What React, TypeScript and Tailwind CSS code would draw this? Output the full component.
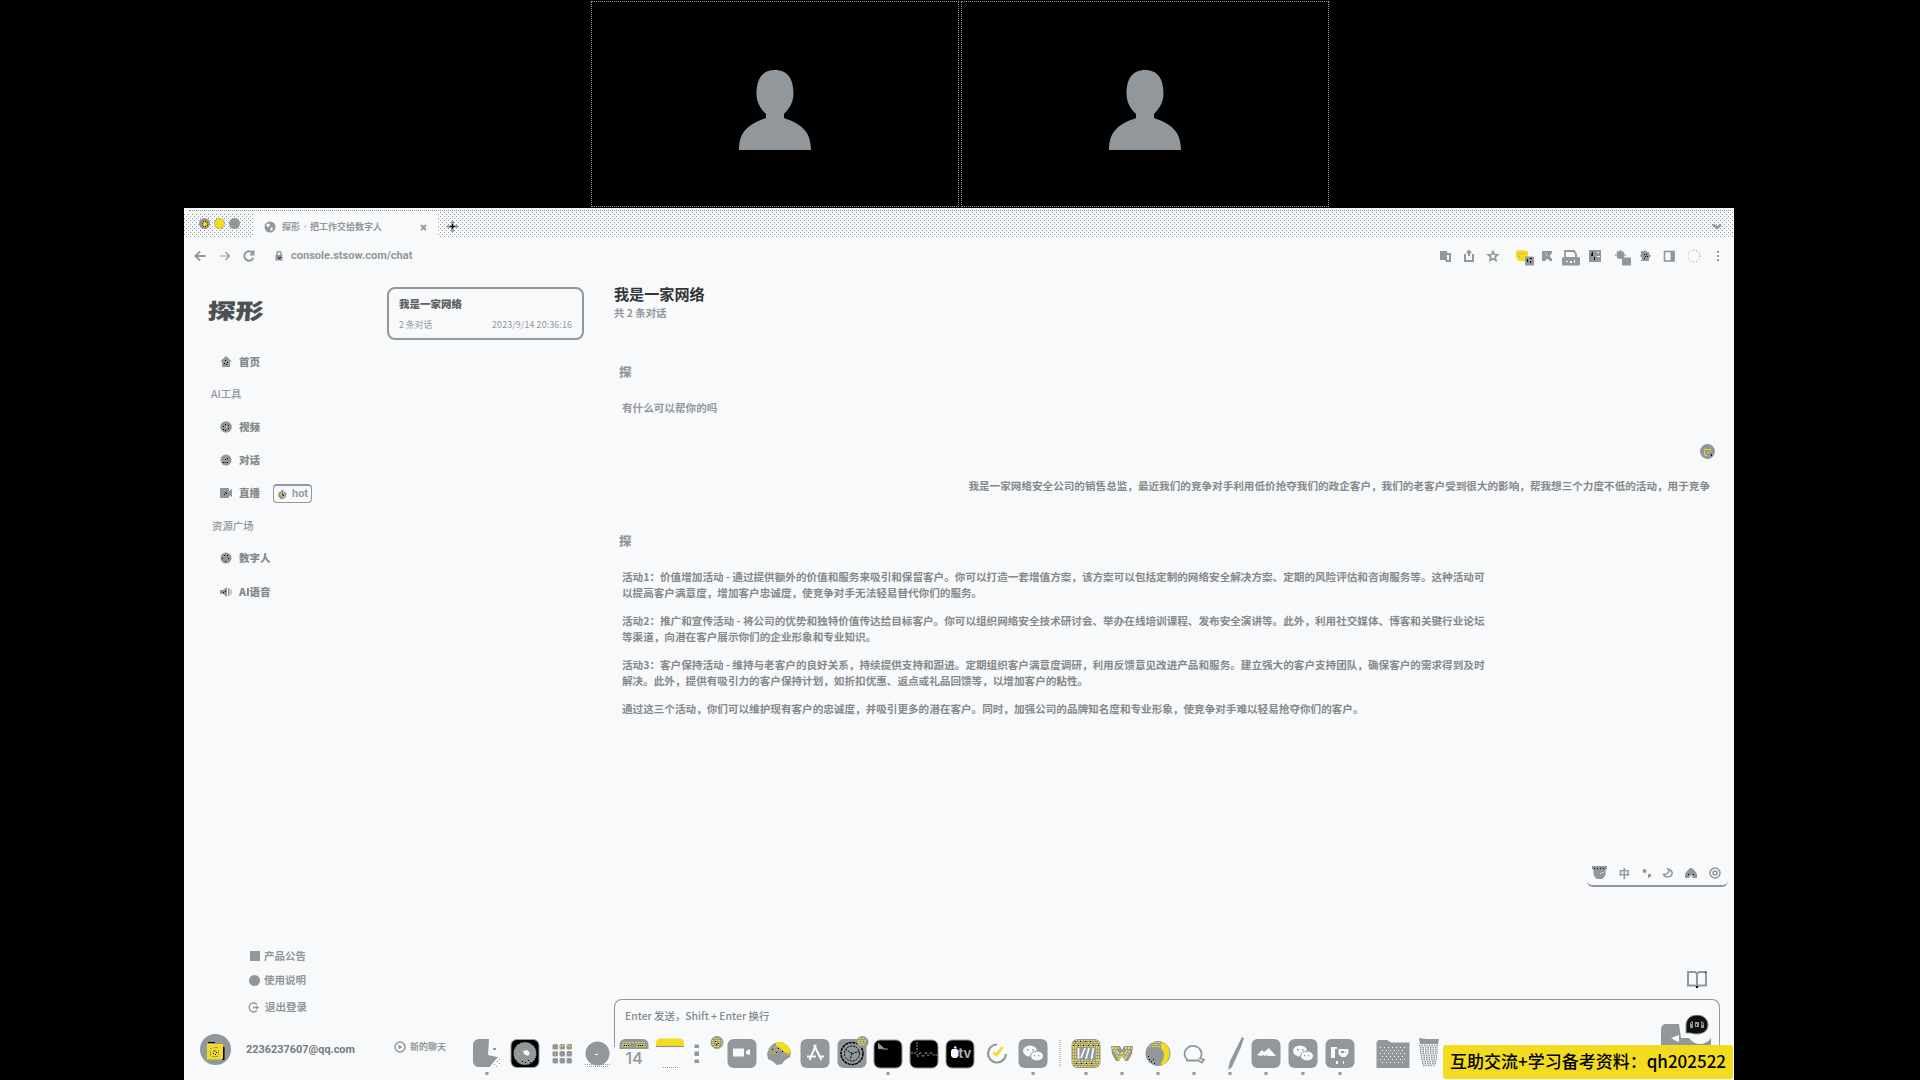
import type { ReactNode } from "react";

const G = "#91979a";
const Y = "#f3dc1f";
const BG = "#f8f9fb";

function Participant() {
  return (
    <div className="flex h-[206px] w-[368px] justify-center border border-dotted border-[#91979a] pt-[68px]">
      <svg width="72" height="80" viewBox="0 0 72 80" className="-ml-px">
        <path d="M36 0C23 0 17.500 9 17.500 24c0 9 5 16 9.500 20v4C10 54 0 61 0 80h72C72 61 62 54 45 48v-4c4-4 9.500-11 9.500-20C54.500 9 49 0 36 0Z" fill={G} />
      </svg>
    </div>
  );
}

function Dots({ className }: { className: string }) {
  return (
    <div
      className={
        "bg-[conic-gradient(at_1px_1px,transparent_75%,#91979a_0),conic-gradient(at_1px_1px,transparent_75%,#91979a_0)] bg-[length:4px_4px] bg-[position:0_0,2px_2px] " +
        className
      }
    />
  );
}

function TabStrip() {
  return (
    <div className="h-[29px] pt-px">
      <div className="relative flex h-[28px] items-start">
        <Dots className="mt-[5px] h-[24px] w-[69px]" />
        <div className="flex h-[28px] w-[185px] items-center pt-[8px] pl-[11px]">
          <svg width="12" height="12" viewBox="0 0 12 12" className="shrink-0">
            <circle cx="6" cy="6" r="5.500" fill={G} />
            <path d="M2 4l2-1.500 2 .8-.5 2L3.500 6ZM6.500 6.500l2.500.2-.7 2.300-1.600 1Z" fill={BG} />
          </svg>
          <span className="ml-[6px] whitespace-nowrap text-[9px] leading-[14px] font-bold text-[#91979a]">
            探形<span className="inline-block w-[10px] text-center font-['Roboto']">·</span>把工作交给数字人
          </span>
          <svg width="7" height="7" viewBox="0 0 7 7" className="mr-[11px] ml-auto" stroke={G} strokeWidth="1.800">
            <path d="M1 1l5 5M6 1L1 6" />
          </svg>
        </div>
        <Dots className="mt-px h-[27px] flex-1" />
        <div className="absolute top-px left-[5px] w-[1540px] border-t border-dotted border-[#91979a]" />
        <div className="absolute top-[9px] left-[15px] flex gap-[4px]">
          <div className="flex size-[11px] items-center justify-center rounded-full bg-[#91979a]">
            <div className="size-[6px] rounded-full border border-dotted border-black bg-[#f3dc1f]" />
          </div>
          <div className="size-[11px] rounded-full border border-dotted border-[#91979a] bg-[#f3dc1f]" />
          <div className="size-[11px] rounded-full bg-[#91979a]" />
        </div>
        <svg width="13" height="13" viewBox="0 0 13 13" className="absolute top-[11px] left-[262px]">
          <path d="M6.500 1v11M1 6.500h11" stroke={G} strokeWidth="2.600" />
          <path d="M6.500 4v5M4 6.500h5" stroke="#000" strokeWidth="1" />
        </svg>
        <svg width="10" height="7" viewBox="0 0 10 7" className="absolute top-[14px] left-[1528px]">
          <path d="M1 1.500l4 3.500 4-3.500" stroke={G} strokeWidth="2.500" fill="none" />
        </svg>
      </div>
    </div>
  );
}

function Ext({ ml, w = 14, children }: { ml: string; w?: number; children: ReactNode }) {
  return (
    <svg width={w} height="20" viewBox={`0 0 ${w} 20`} className={"shrink-0 " + ml}>
      {children}
    </svg>
  );
}

function AddressBar() {
  return (
    <div className="flex h-[38px] items-center">
      <svg width="12" height="12" viewBox="0 0 12 12" className="ml-[10px]" fill="none" stroke={G} strokeWidth="2">
        <path d="M11.500 6H2M6 1.500L1.500 6 6 10.500" />
      </svg>
      <svg width="12" height="12" viewBox="0 0 12 12" className="ml-[13px]" fill="none" stroke={G} strokeWidth="1.200">
        <path d="M1 6h9M6.500 2l4 4-4 4" />
      </svg>
      <svg width="12" height="12" viewBox="0 0 12 12" className="ml-[12px]" fill="none" stroke={G} strokeWidth="2">
        <path d="M10.300 8A4.700 4.700 0 1 1 9.500 2.700M10.500.5v4H7" />
      </svg>
      <svg width="8" height="10" viewBox="0 0 8 10" className="ml-[20px]">
        <path d="M2 4V2.500a2 2 0 0 1 4 0V4" fill="none" stroke={G} strokeWidth="1.500" />
        <rect x=".5" y="4" width="7" height="5.500" fill={G} />
        <path d="M3 6h1v1H3zM5 6h1v1H5zM4 7h1v1H4z" />
      </svg>
      <span className="ml-[8px] w-[122px] whitespace-nowrap font-['Roboto'] text-[11.050px] leading-[16px] font-bold text-[#91979a]">console.stsow.com/chat</span>
      <div className="ml-auto flex items-center pr-[11px]">
        <Ext ml="ml-0">
          <path d="M2 5h7v2h4v9H8l-1-2H2z" fill={G} />
          <path d="M9 9h2v5H9z" fill={BG} />
        </Ext>
        <Ext ml="ml-[10px]">
          <path d="M4 9H3v6h8V9h-1M7 5v5M5 7l2-2 2 2" fill="none" stroke={G} strokeWidth="2" />
        </Ext>
        <Ext ml="ml-[10px]">
          <path d="M7 5.500l1.400 3 3.400.3-2.600 2.200.8 3.400L7 12.700l-3 1.700.8-3.400-2.600-2.200 3.400-.3z" fill={BG} stroke={G} strokeWidth="1.600" />
        </Ext>
        <Ext ml="ml-[15px]" w={20}>
          <path d="M1 5l5-1 7 1v6l-3 4H4L1 11z" fill={Y} />
          <path d="M3 7h1v1H3zM6 7h1v1H6zM9 7h1v1H9zM4 10h1v1H4z" fill={G} />
          <rect x="10" y="10.500" width="9" height="9" rx="1" fill={G} />
          <path d="M12 13h1v3h-1zM15 12h2v1h-2zM15 15h1v2h-1z" />
        </Ext>
        <Ext ml="ml-[6px]" w={12}>
          <path d="M1 5h10v2L8.500 10 11 13v2H9l-2.500-2.500L4 15H1z" fill={G} />
          <path d="M4 7h1v1H4zM5 9h1v1H5z" fill={BG} />
        </Ext>
        <Ext ml="ml-[8px]" w={20}>
          <path d="M4 12V5h9l2 3v4" fill="none" stroke={G} strokeWidth="1.800" />
          <rect x="1" y="11" width="18" height="8.500" rx="1.500" fill={G} />
          <path d="M5 15h2v1H5zM9 15h2v2H9zM13 14h1v3h-1z" fill={BG} />
        </Ext>
        <Ext ml="ml-[7px]">
          <path d="M1 4h12v12H1z" fill={G} />
          <path d="M4 6h1v4H3zM6 11h1v3H6z" />
          <path d="M9 6h2v1H9zM9 10h3v1H9z" fill={BG} />
        </Ext>
        <Ext ml="ml-[11px]" w={18}>
          <circle cx="7.500" cy="9" r="4" fill={G} />
          <path d="M7.500 4v10M2 9h11M4 5.500l7 7" stroke={G} strokeWidth="1.500" strokeDasharray="1 1" />
          <rect x="9" y="11.500" width="9" height="8" fill={G} />
        </Ext>
        <Ext ml="ml-[7px]">
          <path d="M3 5h3a2 2 0 0 1 3 1h2v2l2 2-2 2v3H3l1-3-2-2 1-2z" fill={G} />
          <path d="M6 8h1v1H6zM8 8h1v1H8zM7 10h1v1H7zM9 10h1v1H9zM6 12h1v1H6z" />
        </Ext>
        <Ext ml="ml-[10px]">
          <rect x="2.500" y="5.500" width="9.500" height="9.500" fill="none" stroke={G} strokeWidth="1.600" />
          <rect x="8.500" y="5" width="4" height="10" fill={G} />
        </Ext>
        <Ext ml="ml-[10px]" w={16}>
          <circle cx="8" cy="10" r="6" fill="none" stroke={G} strokeDasharray="1 2" />
        </Ext>
        <Ext ml="ml-[11px]" w={10}>
          <path d="M4 5h2v2H4zM4 9h2v2H4zM4 13h2v2H4z" fill={G} />
        </Ext>
      </div>
    </div>
  );
}

function NavItem({ h, label, icon, children }: { h: string; label: string; icon: ReactNode; children?: ReactNode }) {
  return (
    <div className={"flex items-center pl-[36px] " + h}>
      <svg width="13" height="12" viewBox="0 0 13 12" className="shrink-0" fill={G}>
        {icon}
      </svg>
      <span className="ml-[6px] whitespace-nowrap text-[10.500px] leading-[16px] font-extrabold text-[#84898c]">{label}</span>
      {children}
    </div>
  );
}

function Sidebar() {
  return (
    <div className="flex w-[203px] flex-col">
      <div className="mt-[15px] ml-[24px] flex h-[40px] items-center">
        <span className="origin-left -skew-x-3 scale-x-[1.300] text-[21.500px] leading-none font-black whitespace-nowrap text-[#4c5052] [text-shadow:0_0_1px_#91979a]">探形</span>
      </div>
      <div className="h-[16px]" />
      <NavItem h="h-[32px]" label="首页" icon={<><path d="M6 0l6 5.500h-2V11H2V5.500H0z" /><path fill="#000" d="M5 4h1v1H5zM7 6h1v1H7zM4 7h1v1H4zM6 8h1v1H6z" /></>} />
      <div className="flex h-[32px] items-center pl-[27px] text-[10.400px] leading-[16px] font-medium text-[#91979a]">AI工具</div>
      <NavItem h="h-[33px]" label="视频" icon={<><circle cx="6" cy="6" r="5.800" /><path fill="#000" d="M5 3h1v1H5zM8 4h1v1H8zM3 5h1v1H3zM8 7h1v1H8zM5 9h1v1H5zM3 8h1v1H3z" /><path d="M6 5.500h1v1H6z" fill={BG} /></>} />
      <NavItem h="h-[33px]" label="对话" icon={<><circle cx="6" cy="6" r="5.500" /><path fill="#000" d="M7 4h1v1H7zM5 5h1v1H5zM3 8h1v1H3zM5 8h1v1H5zM7 8h1v1H7z" /></>} />
      <NavItem h="h-[34px]" label="直播" icon={<><path d="M0 1h9v3l3-2v8L9 8.500V11H0z" /><path fill="#000" d="M5 5h1v1H5zM4 7h1v1H4zM6 6h1v1H6z" /></>}>
        <div className="ml-[13px] flex h-[19px] w-[39px] shrink-0 items-center rounded-[4px] border border-t-2 border-[#91979a] pl-[4px]">
          <svg width="9" height="10" viewBox="0 0 9 10">
            <path d="M4 0l2 2.500L8.500 4 8 8 5.500 10h-3L0 7l1-4 2-.5z" fill={G} />
            <path d="M3 4h1v1H3zM6 5h1v1H6zM4 7h1v1H4zM5 3h1v1H5zM3 6h1v1H3zM6 7h1v1H6zM2 5h1v1H2zM5 8h1v1H5z" fill={Y} />
            <path d="M4 5h1v1H4zM5 6h1v1H5z" />
          </svg>
          <span className="ml-[5px] font-['Roboto'] text-[11px] leading-[12px] font-semibold text-[#91979a]">hot</span>
        </div>
      </NavItem>
      <div className="flex h-[32px] items-center pl-[28px] text-[10.400px] leading-[16px] font-medium text-[#91979a]">资源广场</div>
      <NavItem h="h-[32px]" label="数字人" icon={<><circle cx="6" cy="6" r="5.500" /><path fill="#000" d="M4 3h1v1H4zM7 3h1v1H7zM2 6h1v1H2zM8 6h1v1H8zM5 9h1v1H5z" /></>} />
      <NavItem h="h-[35px]" label="AI语音" icon={<><path d="M0 4h3l4-3v10L3 8H0zM8 2h1.500v8H8zM10.500 3.500h1v5h-1z" /><path fill="#000" d="M3 6h1v1H3zM5 5h1v1H5z" /></>} />

      <div className="mt-auto flex flex-col text-[10.500px] leading-[16px] font-bold text-[#91979a]">
        <div className="flex h-[25px] items-center pl-[66px]">
          <div className="mr-[4px] size-[10px] bg-[#91979a]" />
          产品公告
        </div>
        <div className="flex h-[24px] items-center pl-[65px]">
          <div className="mr-[4px] size-[11px] rounded-full bg-[#91979a]" />
          使用说明
        </div>
        <div className="flex h-[30px] items-center pl-[64px]">
          <svg width="11" height="11" viewBox="0 0 11 11" className="mr-[6px]" fill="none" stroke={G} strokeWidth="1.300">
            <path d="M9 2.500A4.500 4.500 0 1 0 9 8.500M5 5.500h5M8.500 4l1.500 1.500L8.500 7" />
          </svg>
          退出登录
        </div>
        <div className="flex h-[58px] items-center pb-[2px] pl-[16px]">
          <svg width="31" height="31" viewBox="0 0 31 31" className="-mt-px shrink-0">
            <circle cx="15.500" cy="15.500" r="15.500" fill={G} />
            <rect x="7" y="10" width="16" height="15.500" fill={Y} />
            <path d="M8 8h7v1H8zM23 13h1.500v13H22v-1h1z" />
            <path d="M10 14h2v1h-2zM14 13h4v1h-4zM10 17h1v5h-1zM18 16h1v5h-1zM13 16h3v2h-3zM12 22h6v1h-6z" fill={G} />
            <path d="M13 19h1v1h-1zM15 20h1v1h-1zM16 18h1v1h-1z" />
          </svg>
          <span className="ml-[15px] font-['Roboto'] text-[10.900px] font-bold text-[#767b7e]">2236237607@qq.com</span>
        </div>
      </div>
    </div>
  );
}

function ChatList() {
  return (
    <div className="flex w-[227px] flex-col">
      <div className="mt-[12px] flex h-[53px] w-[197px] flex-col rounded-[8px] border-2 border-[#91979a] px-[10px] pt-[7px]">
        <span className="text-[10.500px] leading-[16px] font-black text-[#5d6163]">我是一家网络</span>
        <div className="mt-[5px] flex justify-between text-[8.800px] leading-[16px] text-[#91979a]">
          <span>2 条对话</span>
          <span className="tracking-[0.15px]">2023/9/14 20:36:16</span>
        </div>
      </div>
      <div className="mt-auto flex h-[66px] items-center pl-[7px]">
        <svg width="12" height="12" viewBox="0 0 12 12" className="mr-[4px]">
          <circle cx="6" cy="6" r="5" fill="none" stroke={G} strokeWidth="1.500" />
          <path d="M4.500 3.500L8.500 6l-4 2.500z" fill={G} />
        </svg>
        <span className="text-[9px] leading-[16px] font-bold text-[#91979a]">新的聊天</span>
      </div>
    </div>
  );
}

const answer: string[][] = [
  [
    "活动1：价值增加活动 - 通过提供额外的价值和服务来吸引和保留客户。你可以打造一套增值方案，该方案可以包括定制的网络安全解决方案、定期的风险评估和咨询服务等。这种活动可",
    "以提高客户满意度，增加客户忠诚度，使竞争对手无法轻易替代你们的服务。",
  ],
  [
    "活动2：推广和宣传活动 - 将公司的优势和独特价值传达给目标客户。你可以组织网络安全技术研讨会、举办在线培训课程、发布安全演讲等。此外，利用社交媒体、博客和关键行业论坛",
    "等渠道，向潜在客户展示你们的企业形象和专业知识。",
  ],
  [
    "活动3：客户保持活动 - 维持与老客户的良好关系，持续提供支持和跟进。定期组织客户满意度调研，利用反馈意见改进产品和服务。建立强大的客户支持团队，确保客户的需求得到及时",
    "解决。此外，提供有吸引力的客户保持计划，如折扣优惠、返点或礼品回馈等，以增加客户的粘性。",
  ],
  [
    "通过这三个活动，你们可以维护现有客户的忠诚度，并吸引更多的潜在客户。同时，加强公司的品牌知名度和专业形象，使竞争对手难以轻易抢夺你们的客户。",
  ],
];

function Conversation() {
  return (
    <div className="flex flex-1 flex-col">
      <div className="mt-[8px] text-[15.100px] leading-[20px] font-bold text-[#333638]">我是一家网络</div>
      <div className="mt-px text-[10.400px] leading-[18px] font-bold text-[#91979a]">共 2 条对话</div>
      <div className="mt-[42px] ml-[5px] text-[12.500px] leading-[16px] font-black text-[#91979a]">探</div>
      <div className="mt-[20px] ml-[8px] text-[10.600px] leading-[16px] font-bold text-[#91979a]">有什么可以帮你的吗</div>
      <div className="mt-[28px] mr-[19px] flex justify-end">
        <svg width="15" height="15" viewBox="0 0 15 15">
          <circle cx="7.500" cy="7.500" r="7.500" fill={G} />
          <path d="M4 5h7v1H4zM4 7h1v4H4zM7 8h2v1H7zM10 7h1v1h-1zM5 11h2v1H5z" fill={Y} />
          <path d="M11 10h1v2h-1z" />
        </svg>
      </div>
      <div className="mt-[19px] mr-[24px] text-right text-[10.600px] leading-[16px] font-bold whitespace-nowrap text-[#84898c]">
        我是一家网络安全公司的销售总监，最近我们的竞争对手利用低价抢夺我们的政企客户，我们的老客户受到很大的影响，帮我想三个力度不低的活动，用于竞争
      </div>
      <div className="mt-[39px] ml-[5px] text-[12.500px] leading-[16px] font-black text-[#91979a]">探</div>
      <div className="mt-[20px] ml-[8px] flex flex-col gap-[12px] text-[10.600px] leading-[16px] font-bold whitespace-nowrap text-[#84898c]">
        {answer.map((lines, i) => (
          <div key={i}>
            {lines.map((line) => (
              <div key={line}>{line}</div>
            ))}
          </div>
        ))}
      </div>
      <div className="mt-[143px] mr-[6px] flex h-[27px] w-[141px] items-center justify-between self-end rounded-b-[6px] border-b-2 border-[#91979a] pr-[7px] pl-[5px]">
        <svg width="15" height="13" viewBox="0 0 15 13">
          <path d="M0 0h15v3l-1.500 1v5l-3 4h-6l-3-4V4L0 3z" fill={G} />
          <path d="M2 2h1v1H2zM5 2h1v1H5zM8 2h1v1H8zM11 2h1v1h-1z" />
          <path d="M8 7h1v1H8zM10 6h1v1h-1z" fill={BG} />
        </svg>
        <span className="text-[11px] leading-[14px] font-bold text-[#91979a]">中</span>
        <svg width="9" height="10" viewBox="0 0 9 10" fill={G}>
          <circle cx="2.500" cy="3" r="2" />
          <path d="M6 6h3v3H7v1H6z" />
        </svg>
        <svg width="11" height="10" viewBox="0 0 11 10">
          <path d="M6 1c2 2 1 5-4.500 5.500C3 10 9 9.500 10 6c.6-2-1-4.500-4-5Z" fill="none" stroke={G} strokeWidth="1.500" />
        </svg>
        <svg width="12" height="10" viewBox="0 0 12 10">
          <path d="M0 10V6l2-3 3-3h2l3 3 2 3v4H8L6 7l-2 3z" fill={G} />
          <path d="M3 6h1v1H3zM8 6h1v1H8z" />
        </svg>
        <svg width="12" height="12" viewBox="0 0 12 12" fill="none" stroke={G}>
          <circle cx="6" cy="6" r="5" strokeWidth="1.500" />
          <circle cx="6" cy="6" r="2" strokeWidth="1.500" />
        </svg>
      </div>
      <svg width="20" height="17" viewBox="0 0 20 17" className="mt-[84px] mr-[27px] self-end" fill="none" stroke={G} strokeWidth="2">
        <path d="M1 1h7l2 1.500L12 1h7v13.500h-7L10 16l-2-1.500H1zM10 2.500V16" />
        <path d="M9 15h2v2H9zM18 1h1v1h-1z" fill="#000" stroke="none" />
      </svg>
      <div className="mt-auto mr-[14px] h-[81px] shrink-0">
        <div className="relative h-[48px] rounded-t-[8px] border border-b-0 border-[#91979a] pt-[8px] pl-[10px]">
          <span className="block text-[10.400px] leading-[16px] font-medium text-[#84898c]">Enter 发送，Shift + Enter 换行</span>
          <svg width="52" height="40" viewBox="0 0 52 40" className="absolute top-[15px] right-[6px]">
            <path d="M0 40V14a5 5 0 0 1 5-5h13l2 14h8c6 8 16 8 22 0v17z" fill={G} />
            <path d="M10 23l8-3v7l-3-1z" fill={BG} />
            <path d="M25 18V10c0-6 5-10 11-10s11 4 11 10-5 9-11 9c-3 0-5-.5-7-1z" fill="#111" stroke={G} />
            <path d="M29 8l3-2v7h-3zM34 7h4v5h-4zM40 6l3 2v5h-3z" fill={G} />
            <path d="M30 8h1v1h-1zM35 9h1v2h-1zM41 8h1v2h-1z" fill="#111" />
          </svg>
        </div>
      </div>
    </div>
  );
}

function Slot({ ml, run, children }: { ml: string; run?: boolean; children: ReactNode }) {
  return (
    <svg width="30" height="42" viewBox="0 0 30 42" className={"shrink-0 overflow-visible " + ml}>
      {children}
      {run && <rect x="13.500" y="34" width="3" height="3" fill={G} />}
    </svg>
  );
}

const tile = <rect x=".5" y="1" width="29" height="29" rx="6" fill={G} />;
const dark = <rect x="1" y="2" width="28" height="28" rx="6" stroke={G} />;

function WeChatMark() {
  return (
    <>
      {tile}
      <ellipse cx="12" cy="13" rx="7" ry="5.500" fill={BG} />
      <ellipse cx="19" cy="18" rx="6.500" ry="5" fill={BG} stroke={G} />
      <path d="M9 11h1.500v1.500H9zM14 11h1.500v1.500H14zM16 17h1.200v1.200H16zM20 17h1.200v1.200H20z" fill={G} />
    </>
  );
}

function Dock() {
  return (
    <div className="absolute bottom-0 left-[288px] flex h-[42px]">
      <Slot ml="ml-0" run>
        <path d="M1 7a6 6 0 0 1 6-6h10l-1 16 4 1 6 1-7 8-1 2H7a6 6 0 0 1-6-5z" fill={G} />
        <path d="M21 10h3v2h-3z" fill={G} />
        <path d="M22 26h1v1h-1zM25 23h1v1h-1zM27 25h1v1h-1zM27 21h1v1h-1zM24 28h1v1h-1z" fill={G} />
      </Slot>
      <Slot ml="ml-[8px]">
        <rect x="1" y="1.500" width="28" height="28" rx="6" stroke={G} />
        <circle cx="15" cy="15.500" r="11.500" fill={G} />
        <circle cx="15" cy="15.500" r="11.500" fill="none" stroke="#000" strokeDasharray="1 1.500" />
        <path d="M13 13l4-1 3 3-2 3-4-2z" fill={BG} />
        <path d="M4 12h1v1H4zM8 16h1v1H8zM5 19h1v1H5z" fill={Y} />
        <path d="M12 23h1v1h-1zM15 24h1v1h-1zM18 22h1v1h-1zM20 24h1v1h-1z" />
      </Slot>
      <Slot ml="ml-[7px]">
        {[6, 13, 20].map((y) => [6, 13, 20].map((x) => <rect key={x + "-" + y} x={x - 0.5} y={y} width="5.500" height="5.500" rx="1.500" fill={G} />))}
        <path d="M12 7h2v2h-2zM15 7h2v1h-2zM20 7h2v1h-2zM22 8h2v1h-2zM8 16h1v1H8zM7 13h2v1H7zM22 15h1v1h-1z" fill={Y} />
      </Slot>
      <Slot ml="ml-[6px]">
        <circle cx="14.500" cy="15.500" r="12" fill={G} />
        <path d="M2 26.500h26M4 28.500h22" stroke={G} strokeDasharray="1 1" />
        <path d="M12 16h3v1h-3z" fill={BG} />
      </Slot>
      <Slot ml="ml-[6px]">
        <path d="M.5 11V7c0-4 3-6 6-6h17c3 0 6 2 6 6v4z" fill={G} />
        <path d="M4 4.500h22M3 6.500h9M18 6.500h9M2 8.500h10M17 8.500h10" stroke={Y} strokeWidth="1.200" strokeDasharray="2 1" />
        <path d="M5 7.500h6M19 7.500h6" stroke="#000" strokeDasharray="1 1" />
        <text x="15" y="25.500" textAnchor="middle" fontFamily="Inter" fontSize="16.500" fontWeight="500" fill={G}>14</text>
      </Slot>
      <Slot ml="ml-[6px]">
        <path d="M1 8V5c0-3 2-4.500 4.500-4.500h19C27 .5 29 2 29 5v3z" fill={Y} />
        <path d="M1 8.500h28" stroke={G} strokeWidth="1.200" />
        <path d="M8 29.500h15" stroke={G} strokeDasharray="1 1" />
      </Slot>
      <Slot ml="-ml-[3px]">
        <path d="M12.500 6.500h4.500v3.500h-4.500zM12.500 13.500h4.500v4.500h-4.500zM12.500 21.500h4.500v3.500h-4.500z" fill={G} />
      </Slot>
      <Slot ml="-ml-[10px]">
        <circle cx="15" cy="4.500" r="6.500" fill={G} />
        <path d="M12 .5h6M10 2.500h10M10 4.500h10M10 6.500h10M12 8.500h6" stroke={Y} strokeWidth="1.200" strokeDasharray="2 1" />
        <path d="M13 3h1v1h-1zM16 5h1v1h-1zM14 6h1v1h-1z" />
      </Slot>
      <Slot ml="-ml-[5px]">
        {tile}
        <path d="M6 10.500h11v8H6zM19 13l4-2v6l-4-1z" fill={BG} />
      </Slot>
      <Slot ml="ml-[7px]">
        <path d="M14 4l5 1 5 3 3 5-1 6-5 3-3 4-5 1-5-4-4-2-1-5 2-6 4-4z" fill={G} />
        <path d="M12 4l7 0 5 4 3 5-2 3-5-2-4-4-4-2z" fill={Y} />
        <path d="M6 9h6M5 12h11M5 15h9M18 17h8" stroke={Y} strokeWidth="1.200" strokeDasharray="1 1.500" />
        <path d="M8 11h1v1H8zM12 14h1v1h-1zM18 13h1v1h-1zM14 10h1v1h-1z" />
      </Slot>
      <Slot ml="ml-[6px]">
        {tile}
        <path d="M16 7L9.500 22M14 7l7.500 15M7 18.500h9M19 18.500h5" stroke={BG} strokeWidth="2" />
      </Slot>
      <Slot ml="ml-[6.500px]">
        {tile}
        <circle cx="15" cy="15.500" r="11" fill="none" stroke="#000" strokeWidth="1.500" strokeDasharray="3 .7" />
        <circle cx="15" cy="15.500" r="7.500" fill="none" stroke="#000" strokeDasharray="2 1" />
        <path d="M15 15.500l-6-4M15 15.500l7-2M15 15.500l-2 6" stroke="#000" strokeDasharray="2 1" />
        <circle cx="25.500" cy="4" r="6" fill={G} />
        <path d="M22 .5h7M21 2.500h9M21 4.500h9M22 6.500h7" stroke={Y} strokeWidth="1.200" strokeDasharray="2 1" />
      </Slot>
      <Slot ml="ml-[6px]" run>
        {dark}
        <path d="M5.500 5.500l6 5.500-6-.5zM11 11h4" stroke={G} strokeWidth="1" fill={G} />
      </Slot>
      <Slot ml="ml-[6.500px]">
        {dark}
        <path d="M8 4v10M2 15h5l2 4 2-5 3 5 3-5 2 4 3-4 2 3h4" stroke={G} fill="none" strokeDasharray="2 1" />
      </Slot>
      <Slot ml="ml-[5.500px]">
        {dark}
        <path d="M7 11h5l1.500 2v5l-2 2H8l-2-2v-5zM9 8.500h2.500v2H9z" fill={BG} />
        <text x="20" y="20" textAnchor="middle" fontFamily="Inter" fontSize="13" fontWeight="700" fill="#a9aeb1">tv</text>
      </Slot>
      <Slot ml="ml-[7px]">
        <path d="M15 6.500a9 9 0 1 0 9 9.500" stroke={G} strokeWidth="2.200" fill="none" />
        <path d="M11 14.500l3.500 2.500 6-8" stroke={Y} strokeWidth="2.400" fill="none" />
      </Slot>
      <Slot ml="ml-[6px]" run>
        <WeChatMark />
      </Slot>
      <Slot ml="-ml-[2.500px]">
        <path d="M15 2v28" stroke={G} strokeDasharray="1 1" />
      </Slot>
      <Slot ml="-ml-[4.500px]" run>
        {tile}
        <path d="M4 2.500h22M2 4.500h26M1 6.500h28M1 8.500h28M1 22.500h28M1 24.500h28M2 26.500h26M4 28.500h22M2.500 9v14M4.500 9v14M27.500 9v14M25.500 9v14" stroke={Y} strokeWidth="1.200" strokeDasharray="2 1" />
        <path d="M4 3.500h20M5 25.500h20M2 7.500h26" stroke="#000" strokeDasharray="1 4" />
        <path d="M7.500 10v11M10 20l4-10M15 21l3-11M20.500 21l2-11" stroke={BG} strokeWidth="1.800" />
      </Slot>
      <Slot ml="ml-[6px]" run>
        <path d="M4 8h9l2 4 2-4h9l-1 8-4 7h-3l-3-5-3 5H9l-4-7z" fill={G} />
        <path d="M5 10h7M18 10h7M7 12l5 9 3-7 3 7 5-9" stroke={Y} strokeDasharray="2 1" strokeWidth="1.800" fill="none" />
        <path d="M9 12l3 4M20 12l-2 4" stroke={BG} />
      </Slot>
      <Slot ml="ml-[6px]" run>
        <circle cx="15" cy="15.500" r="12.500" fill={G} />
        <path d="M20 4.500c9 4 9 18-1 23-3-3 3-6 2-12-1-5-6-4-1-11z" fill={Y} />
        <path d="M8 6.500h13M9 4.500h11M6 8.500h12" stroke={Y} strokeWidth="1.200" strokeDasharray="2 1" />
        <path d="M6 21h1v1H6zM8 23h1v1H8zM10 21h1v1h-1zM11 25h1v1h-1zM5 18h1v1H5z" />
      </Slot>
      <Slot ml="ml-[6.500px]" run>
        <path d="M8 21.500a8.500 8 0 1 1 13-1l4 1-2 3-4-2H8z" fill="none" stroke={G} strokeWidth="1.800" />
        <path d="M19 19h1v1h-1z" fill={Y} />
      </Slot>
      <Slot ml="ml-[6px]" run>
        <path d="M27 -1l2 1-3 9-9 20-4 3 2-9z" fill={G} />
      </Slot>
      <Slot ml="ml-[6px]" run>
        {tile}
        <path d="M6 17l5-5 2 2 5-4 7 8h-8l-1-1-2 1-2-1-2 1z" fill={BG} />
      </Slot>
      <Slot ml="ml-[7px]" run>
        <WeChatMark />
      </Slot>
      <Slot ml="ml-[6.500px]" run>
        {tile}
        <path d="M6 9h6v2h-2v9H6zM13.500 11h10v4l-3 4h-4l-3-3z" fill={BG} />
        <path d="M11 23h2v3h-2zM18 23h1v3h-1z" fill={BG} />
        <path d="M16 13h3v2h-3zM20 14h1v1h-1z" fill={G} />
      </Slot>
      <Slot ml="ml-[23px]">
        <path d="M-1.500 4l2-2H9l4 2.500h18.500V30h-33z" fill={G} />
        <path d="M2 9.500h28M4 12.500h24M2 15.500h28M4 18.500h24M2 21.500h28M4 24.500h24" stroke={BG} strokeDasharray="1 3" />
      </Slot>
      <Slot ml="ml-[6px]">
        <path d="M5 0l8 1 12 0-1 5H6z" fill={G} />
        <path d="M5 7.500h20M6 9.500h18M6 11.500h18M6 13.500h18M6 15.500h18M7 17.500h16M7 19.500h16M7 21.500h16M8 23.500h14M8 25.500h14M9 27.500h12" stroke={G} strokeWidth="1.300" strokeDasharray="1.500 1" />
      </Slot>
    </div>
  );
}

export default function App() {
  return (
    <div className="flex h-[1080px] w-[1920px] flex-col overflow-hidden bg-black font-['Noto_Sans_CJK_SC',sans-serif]">
      <div className="flex h-[208px] shrink-0 gap-[2px] pt-px pl-[591px]">
        <Participant />
        <Participant />
      </div>
      <div className="relative ml-[184px] flex h-[872px] w-[1550px] flex-col bg-[#f8f9fb]">
        <TabStrip />
        <AddressBar />
        <div className="flex min-h-0 flex-1">
          <Sidebar />
          <ChatList />
          <Conversation />
        </div>
        <Dock />
        <div className="absolute right-px bottom-px flex h-[34px] w-[290px] items-center justify-center rounded-[3px] bg-[#f3dc1f] pb-[2px] text-[17px] leading-[24px] font-medium whitespace-nowrap text-black">
          互助交流+学习备考资料：qh202522
        </div>
      </div>
    </div>
  );
}
